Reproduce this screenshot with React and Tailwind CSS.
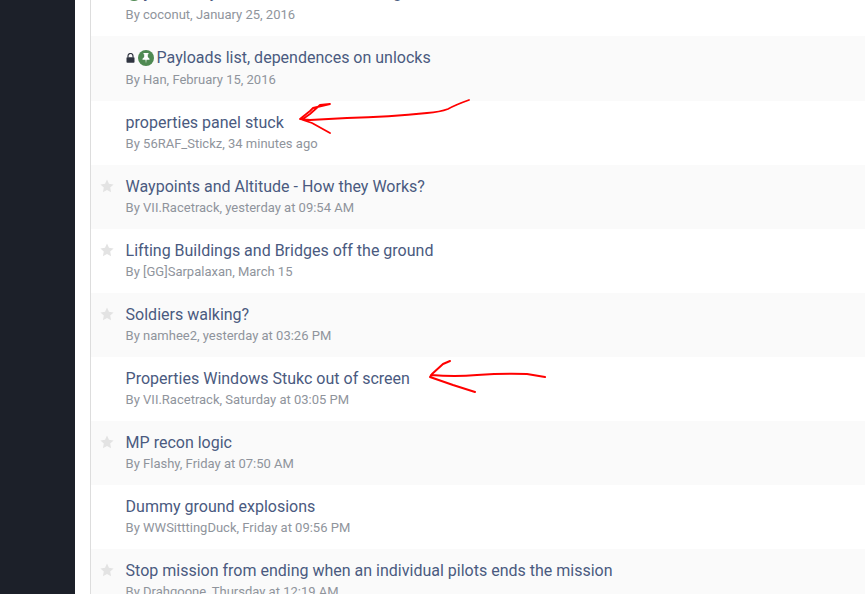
const rows = [
  { title: "jet runway and other mission settings", meta: "By coconut, January 25, 2016", pin: true, tone: "white", box: "h-[63px] pt-[9px]" },
  { title: "Payloads list, dependences on unlocks", meta: "By Han, February 15, 2016", pin: true, lock: true, tone: "grey", box: "h-[65px] pt-[11px]" },
  { title: "properties panel stuck", meta: "By 56RAF_Stickz, 34 minutes ago", tone: "white" },
  { title: "Waypoints and Altitude - How they Works?", meta: "By VII.Racetrack, yesterday at 09:54 AM", star: true, tone: "grey" },
  { title: "Lifting Buildings and Bridges off the ground", meta: "By [GG]Sarpalaxan, March 15", star: true, tone: "white" },
  { title: "Soldiers walking?", meta: "By namhee2, yesterday at 03:26 PM", star: true, tone: "grey" },
  { title: "Properties Windows Stukc out of screen", meta: "By VII.Racetrack, Saturday at 03:05 PM", tone: "white" },
  { title: "MP recon logic", meta: "By Flashy, Friday at 07:50 AM", star: true, tone: "grey" },
  { title: "Dummy ground explosions", meta: "By WWSitttingDuck, Friday at 09:56 PM", tone: "white" },
  { title: "Stop mission from ending when an individual pilots ends the mission", meta: "By Drahgoone, Thursday at 12:19 AM", star: true, tone: "grey" },
];

function Star() {
  return (
    <svg width="14" height="14" viewBox="0 0 24 24" className="absolute left-[9px] top-[14px]">
      <path d="M12 1l3.400 7.300 7.900 1-5.800 5.400 1.500 7.900L12 18.700l-7 3.900 1.500-7.900L.7 9.300l7.900-1z" fill="#e3e3e3" />
    </svg>
  );
}

function Lock() {
  return (
    <svg width="9" height="10" viewBox="0 0 9 10" className="mr-[3px] shrink-0">
      <path d="M2 4.500V3a2.500 2.500 0 0 1 5 0v1.500" fill="none" stroke="#2f3440" strokeWidth="1.200" />
      <rect x="0.500" y="4.300" width="8" height="5.500" rx="0.800" fill="#2f3440" />
    </svg>
  );
}

function Pin() {
  return (
    <span className="mr-[3px] flex h-4 w-4 shrink-0 items-center justify-center rounded-full bg-[#4f8a52]">
      <svg width="10" height="12" viewBox="0 0 10 12">
        <path d="M2.500 1h5v1.200H6.800V5L8.500 6.800V7.800H5.500L5 11.500 4.500 7.800H1.500V6.800L3.200 5V2.200H2.500z" fill="#fff" />
      </svg>
    </span>
  );
}

export default function App() {
  return (
    <div className="flex h-[594px] w-[865px] overflow-hidden bg-white font-['Roboto',sans-serif]">
      <div className="w-[75px] shrink-0 bg-[#1c2029]" />
      <div className="ml-[15px] h-full flex-1 overflow-hidden border-l border-[#dddddd]">
        <div className="relative -mt-[27px]">
          {rows.map((r) => (
            <div
              key={r.meta}
              className={`relative pl-[34.6px] ${r.box || "h-16 pt-[10px]"} ${r.tone === "grey" ? "bg-[#fafafa]" : "bg-white"}`}
            >
              {r.star && <Star />}
              <div className={`flex h-[22px] items-center whitespace-nowrap text-base leading-[22px] text-[#4a5a80] ${r.pin ? "" : "translate-y-px"}`}>
                {r.lock && <Lock />}
                {r.pin && <Pin />}
                <span>{r.title}</span>
              </div>
              <div className="mt-[1px] text-[13px] leading-[19px] text-[#8f949c]">{r.meta}</div>
            </div>
          ))}
          <svg className="absolute left-[209px] top-[127px] overflow-visible" width="170" height="34" viewBox="0 0 170 34" fill="none" stroke="#ff0000" strokeWidth="1.800" strokeLinecap="round" strokeLinejoin="round">
            <path d="M169 0 Q155 5 148 9 Q140 12 127 13 Q90 17 47 18 L10 20 L0 19 M0 19 L10 11 L13 8 L30 4 L20 5 L10 14 L3 19 M0 19 L12 23 L30 33" />
          </svg>
          <svg className="absolute left-[339px] top-[387px] overflow-visible" width="116" height="33" viewBox="0 0 116 33" fill="none" stroke="#ff0000" strokeWidth="2" strokeLinecap="round" strokeLinejoin="round">
            <path d="M20 1 L13 4 L2 14 L0 17 L23 25 L45 32 M1 15 Q25 17 47 15 Q75 13 97 14 L115 17" />
          </svg>
        </div>
      </div>
    </div>
  );
}
